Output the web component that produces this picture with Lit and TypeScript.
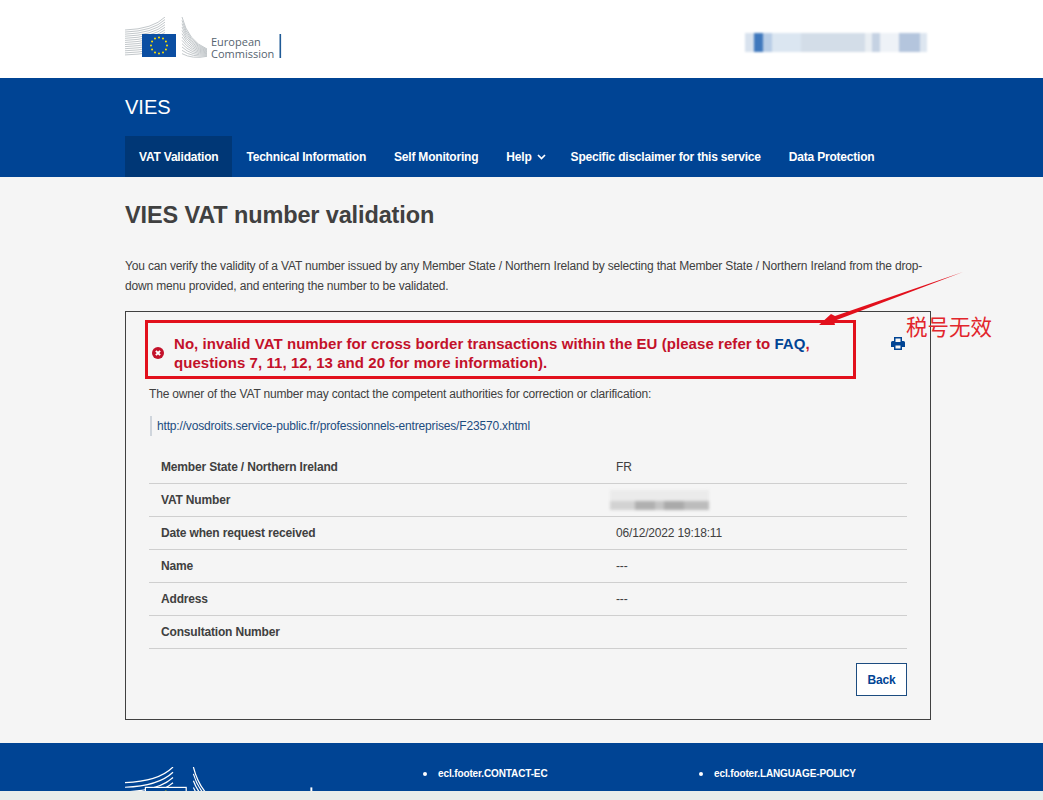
import { css, html, LitElement, svg } from 'lit';
import { customElement } from 'lit/decorators.js';

const NAV = [
  'VAT Validation',
  'Technical Information',
  'Self Monitoring',
  'Help',
  'Specific disclaimer for this service',
  'Data Protection',
];

const ROWS = [
  ['Member State / Northern Ireland', 'FR'],
  ['VAT Number', ''],
  ['Date when request received', '06/12/2022 19:18:11'],
  ['Name', '---'],
  ['Address', '---'],
  ['Consultation Number', ''],
];

const range = (n: number) => Array.from({ length: n }, (_, i) => i);

// the Berlaymont mark, same drawing for header (grey) and footer (white, outlined flag)
function logo(footer: boolean) {
  const ink = footer ? '#ffffff' : '#c3c8cb';
  const text = footer ? '#ffffff' : '#56646f';
  const bar = footer ? '#ffffff' : '#1f5a96';
  const left = footer ? 7 : 13;
  const right = footer ? 7 : 12;
  const stars = range(12).map((i) => {
    const a = (i * Math.PI) / 6;
    return svg`<circle cx=${34 + 8 * Math.cos(a)} cy=${28.5 + 8 * Math.sin(a)} r="1" fill="#ffe100"></circle>`;
  });
  return html`<svg class=${footer ? 'logo logo-foot' : 'logo'} viewBox="0 0 160 60" aria-hidden="true">
    ${range(left).map((i) => {
      const step = 27 / left;
      return svg`<path d="M0 ${13 + i * step} Q28 ${12 + i * step} 40 ${i * (step + 0.5)}" fill="none" stroke=${ink} stroke-width="1"></path>`;
    })}
    ${range(right).map((i) => {
      const step = 40 / right;
      return svg`<path d="M57 ${i * step} Q${63 + i * 0.4} ${24 + i * step * 0.5} 82 ${32 + i * step * 0.2}" fill="none" stroke=${ink} stroke-width="1"></path>`;
    })}
    <rect x="17" y="17" width="34" height="23" fill=${footer ? '#004494' : '#0b4ea2'} stroke=${footer ? '#ffffff' : 'none'}></rect>
    ${stars}
    <text x="86" y="29" font-size="11" fill=${text} font-family="'Open Sans', sans-serif">European</text>
    <text x="86" y="41" font-size="11" fill=${text} font-family="'Open Sans', sans-serif">Commission</text>
    <rect x="154.5" y="17" width="1.6" height="24" fill=${bar}></rect>
  </svg>`;
}

@customElement('app-root')
export class AppRoot extends LitElement {
  static styles = css`
    :host {
      display: block;
      position: relative;
      width: 1043px;
      height: 800px;
      overflow: hidden;
      background: #f5f5f5;
      color: #404040;
      font-family: 'Liberation Sans', Arial, sans-serif;
      font-size: 12px;
      letter-spacing: -0.17px;
    }
    a {
      color: inherit;
      text-decoration: none;
    }

    .top {
      height: 78px;
      background: #fff;
      padding-left: 125px;
      display: flex;
      align-items: flex-start;
      justify-content: space-between;
      box-sizing: border-box;
    }
    .logo {
      display: block;
      width: 160px;
      height: 60px;
      margin-top: 17px;
      flex: none;
      letter-spacing: 0;
    }
    .logo-foot {
      width: 192px;
      height: 72px;
      margin-top: 0;
    }
    .blur-lang {
      width: 182px;
      height: 19px;
      margin: 33px 116px 0 0;
      filter: blur(1px);
      background: linear-gradient(
        90deg,
        #d8e2ee 0 9px,
        #3f78bd 9px 18px,
        #b8cde6 18px 27px,
        #dbe6f1 27px 56px,
        #d3dde8 56px 120px,
        #e9eef3 120px 127px,
        #c5d2e3 127px 135px,
        #eef2f7 135px 154px,
        #b4c5dd 154px 175px,
        #dde6f0 175px 182px
      );
    }

    .band {
      background: #004494;
      color: #fff;
      padding-left: 125px;
      height: 99px;
    }
    .site {
      height: 58px;
      line-height: 58px;
      font-size: 20px;
      letter-spacing: 0;
    }
    .nav {
      display: flex;
      height: 41px;
      font-weight: 700;
    }
    .nav a {
      display: flex;
      align-items: center;
      gap: 5px;
      padding: 0 14px;
      letter-spacing: -0.2px;
    }
    .nav a.active {
      background: #003776;
    }
    .nav a.has-menu {
      padding-right: 11px;
    }
    .chev {
      width: 9px;
      height: 6px;
    }

    .main {
      padding: 23px 112px 0 125px;
    }
    h1 {
      margin: 0;
      font-size: 23.5px;
      line-height: 30px;
      font-weight: 700;
      letter-spacing: -0.13px;
    }
    .intro {
      margin: 26px 0 15px;
      line-height: 20px;
      width: 806px;
    }

    .card {
      width: 806px;
      height: 409px;
      box-sizing: border-box;
      border: 1px solid #404040;
      padding: 22px 23px 0;
    }
    .msg {
      display: flex;
      align-items: center;
      padding-left: 3px;
      color: #c3112a;
      font-size: 15px;
      font-weight: 700;
      line-height: 19px;
      letter-spacing: 0.06px;
    }
    .msg-icon {
      width: 12px;
      height: 12px;
      flex: none;
      margin-right: 10px;
    }
    .msg-text {
      width: 660px;
      flex: none;
    }
    .msg-text a {
      color: #004494;
    }
    .print {
      width: 14px;
      height: 13px;
      margin: -19px 2px 0 auto;
      flex: none;
    }
    .owner {
      margin: 12px 0 12px;
      line-height: 20px;
    }
    .link {
      display: block;
      border-left: 2px solid #cfd5dc;
      padding-left: 5px;
      line-height: 20px;
      margin-left: 1px;
      color: #1c4c80;
    }

    .rows {
      margin-top: 15px;
    }
    .row {
      display: grid;
      grid-template-columns: 455px 1fr;
      height: 33px;
      box-sizing: border-box;
      align-items: center;
      padding-left: 12px;
      border-bottom: 1px solid #cfcfcf;
    }
    .row b {
      font-weight: 700;
    }
    .blur-vat {
      width: 99px;
      height: 20px;
      margin-left: -6px;
      filter: blur(1.5px);
      background: linear-gradient(
          90deg,
          #d2d2d2 0 25%,
          #b0b0b0 25% 45%,
          #c4c4c4 45% 55%,
          #aaaaaa 55% 75%,
          #bcbcbc 75% 100%
        )
        0 100% / 100% 45% no-repeat;
      background-color: #ebebeb;
    }

    .actions {
      display: flex;
      justify-content: flex-end;
      margin-top: 14px;
    }
    .back {
      width: 51px;
      height: 33px;
      box-sizing: border-box;
      border: 1px solid #1c4c80;
      background: #fff;
      color: #004494;
      font: 12px 'Liberation Sans', Arial, sans-serif;
      font-weight: 700;
      letter-spacing: -0.2px;
      padding: 0;
    }

    .footer {
      display: grid;
      grid-template-columns: 298px 276px 1fr;
      margin-top: 23px;
      height: 48px;
      overflow: hidden;
      box-sizing: border-box;
      padding: 24px 0 0 125px;
      background: #004494;
      color: #fff;
      font-size: 10px;
      font-weight: 700;
    }
    .footer ul {
      list-style: none;
      margin: 0;
      padding: 0 0 0 15px;
    }
    .footer li {
      position: relative;
      line-height: 13px;
      letter-spacing: -0.12px;
    }
    .footer li::before {
      content: '';
      position: absolute;
      left: -15px;
      top: 5px;
      width: 4px;
      height: 4px;
      border-radius: 50%;
      background: #fff;
    }
    .strip {
      height: 9px;
      background: #e9ecea;
    }

    /* red annotations pasted over the screenshot */
    .mark {
      position: absolute;
      left: 145px;
      top: 320px;
      width: 711px;
      height: 59px;
      box-sizing: border-box;
      border: 3px solid #e2101c;
    }
    .arrow {
      position: absolute;
      left: 810px;
      top: 265px;
      width: 160px;
      height: 70px;
    }
    .note {
      position: absolute;
      left: 906px;
      top: 310px;
      color: #e2262c;
      font: 400 21.5px/32px 'Noto Sans CJK SC', 'Liberation Sans', sans-serif;
      letter-spacing: 0;
      white-space: nowrap;
    }
  `;

  render() {
    return html`
      <header class="top">
        ${logo(false)}
        <div class="blur-lang"></div>
      </header>
      <div class="band">
        <div class="site">VIES</div>
        <nav class="nav">
          ${NAV.map(
            (item, i) => html`<a href="#" class="${i === 0 ? 'active' : ''} ${item === 'Help' ? 'has-menu' : ''}">
              ${item}
              ${item === 'Help'
                ? html`<svg class="chev" viewBox="0 0 9 6"><path d="M1 1l3.5 3.5L8 1" fill="none" stroke="#fff" stroke-width="1.7"></path></svg>`
                : ''}
            </a>`,
          )}
        </nav>
      </div>
      <main class="main">
        <h1>VIES VAT number validation</h1>
        <p class="intro">
          You can verify the validity of a VAT number issued by any Member State / Northern Ireland by selecting that
          Member State / Northern Ireland from the drop-down menu provided, and entering the number to be validated.
        </p>
        <section class="card">
          <div class="msg">
            <svg class="msg-icon" viewBox="0 0 12 12">
              <circle cx="6" cy="6" r="6" fill="#c3112a"></circle>
              <path d="M3.900 3.900l4.200 4.200M8.100 3.900L3.900 8.100" stroke="#fff" stroke-width="2"></path>
            </svg>
            <div class="msg-text">
              No, invalid VAT number for cross border transactions within the EU (please refer to
              <a href="#">FAQ</a>, questions 7, 11, 12, 13 and 20 for more information).
            </div>
            <svg class="print" viewBox="0 0 14 13">
              <path
                fill="#004494"
                fill-rule="evenodd"
                d="M3 0h8v4h1.500A1.500 1.500 0 0 1 14 5.500V10h-3v3H3v-3H0V5.500A1.500 1.500 0 0 1 1.500 4H3zM4.500 1.500V5h5V1.500zM4.500 8.500v3h5v-3z"
              ></path>
            </svg>
          </div>
          <div class="owner">The owner of the VAT number may contact the competent authorities for correction or clarification:</div>
          <a class="link" href="#">http://vosdroits.service-public.fr/professionnels-entreprises/F23570.xhtml</a>
          <div class="rows">
            ${ROWS.map(
              ([label, value]) => html`<div class="row">
                <b>${label}</b>
                ${label === 'VAT Number' ? html`<div class="blur-vat"></div>` : html`<span>${value}</span>`}
              </div>`,
            )}
          </div>
          <div class="actions"><button class="back">Back</button></div>
        </section>
      </main>
      <footer class="footer">
        ${logo(true)}
        <ul><li>ecl.footer.CONTACT-EC</li></ul>
        <ul><li>ecl.footer.LANGUAGE-POLICY</li></ul>
      </footer>
      <div class="strip"></div>

      <div class="mark"></div>
      <svg class="arrow" viewBox="0 0 160 70">
        <path d="M153 7L25 51l-4-2L9 60h16l-1-4z" fill="#e2101c"></path>
      </svg>
      <div class="note">税号无效</div>
    `;
  }
}
